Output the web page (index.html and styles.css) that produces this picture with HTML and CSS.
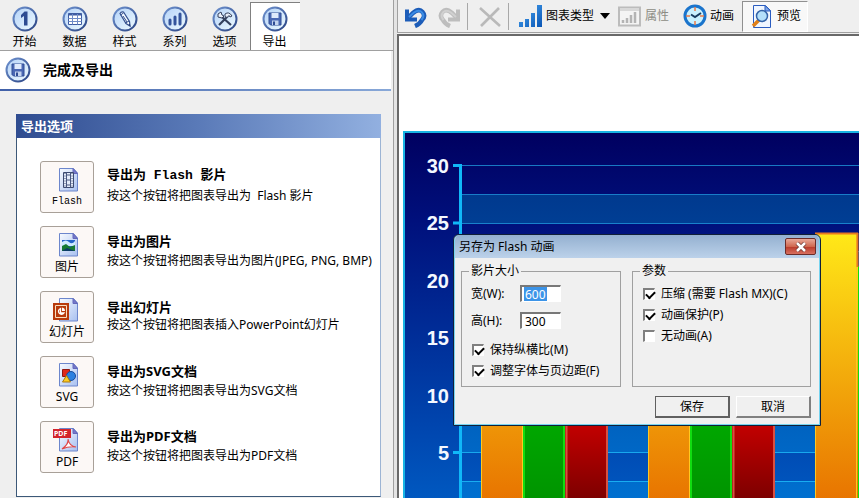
FILE: index.html
```html
<!DOCTYPE html>
<html lang="zh-CN">
<head>
<meta charset="utf-8">
<title>完成及导出</title>
<link rel="stylesheet" href="styles.css">
</head>
<body>
<svg class="defs" aria-hidden="true">
  <defs>
    <linearGradient id="ringStroke" x1="0" y1="0" x2="1" y2="1"><stop offset="0" stop-color="#6f93d0"/><stop offset="1" stop-color="#2a4484"/></linearGradient>
    <linearGradient id="ringFill" x1="0" y1="0" x2="1" y2="1"><stop offset="0" stop-color="#b4d2f8"/><stop offset="1" stop-color="#eefaff"/></linearGradient>
    <linearGradient id="pageFill" x1="0" y1="0" x2="1" y2="1"><stop offset="0" stop-color="#f8fbff"/><stop offset="1" stop-color="#a8c0f0"/></linearGradient>
    <linearGradient id="blueFill" x1="0" y1="0" x2="1" y2="1"><stop offset="0" stop-color="#4aa8f4"/><stop offset="1" stop-color="#0a55b4"/></linearGradient>
    <symbol id="ring" viewBox="0 0 26 26"><circle cx="13" cy="13" r="11.500" fill="url(#ringFill)" stroke="url(#ringStroke)" stroke-width="2"/></symbol>
    <symbol id="disk" viewBox="0 0 26 26">
      <use href="#ring"/>
      <path d="M7 7h12v12H8.500L7 17.500z" fill="#4a68b4" stroke="#2f4c94"/>
      <path d="M9.500 7h7v5h-7z" fill="#dfeafc"/><path d="M10 14.500h6.500V19H10z" fill="#c4d4ee"/><path d="M11 15.500h2V19h-2z" fill="#2f4c94"/>
    </symbol>
    <symbol id="page" viewBox="0 0 28 24">
      <path d="M6.500.500h14l4 4.500v18h-18z" fill="url(#pageFill)" stroke="#6c86cc"/>
      <path d="M20 .500v5h4.500z" fill="#7478c8" stroke="#6468bc"/>
    </symbol>
  </defs>
</svg>
<div class="app">
  <aside class="side">
    <nav class="tabs">
      <button class="tab"><svg viewBox="0 0 26 26"><use href="#ring"/><path d="M9 9l3.500-3.500H15.500V19.500h-3.500V10l-3 2z" fill="#2d4b92"/></svg>开始</button>
      <button class="tab"><svg viewBox="0 0 26 26"><use href="#ring"/><path d="M6.500 7.500h13v11h-13z" fill="#fff" stroke="#3f5ca2"/><path d="M6.500 8.500h13" stroke="#3f5ca2" stroke-width="2"/><path d="M6.500 12.500h13M6.500 15.500h13M10.500 8v10.500M15.500 8v10.500" stroke="#6f8cc8"/></svg>数据</button>
      <button class="tab"><svg viewBox="0 0 26 26"><use href="#ring"/><path d="M8 7.500q1-2 3.500-1.500l6 9.500.5 4.500-4-2.500z" fill="#f5faff" stroke="#34508f" stroke-width="1.200"/><path d="M8.500 9l3-2M13.500 17l3.500-2M11 10l4 6" stroke="#34508f"/><path d="M16.500 18.500l2 2.500-.5-3z" fill="#203468"/></svg>样式</button>
      <button class="tab"><svg viewBox="0 0 26 26"><use href="#ring"/><path d="M8 14v4M13 11v7M18 8v10" stroke="#34549c" stroke-width="3" stroke-linecap="round"/></svg>系列</button>
      <button class="tab"><svg viewBox="0 0 26 26"><use href="#ring"/><path d="M7 19l9-9M10 11l9 8" stroke="#35415e" stroke-width="2.200"/><path d="M6 8l3-2 1 3 2 1-2 2-4-1zM13 8q4-3 7 2l-2 1-1-1.500-2 2-2-1z" fill="#e8eef8" stroke="#35415e"/></svg>选项</button>
      <button class="tab tab-on"><svg viewBox="0 0 26 26"><use href="#disk"/></svg>导出</button>
    </nav>
    <header class="head">
      <svg viewBox="0 0 26 26"><use href="#disk"/></svg>
      <h1>完成及导出</h1>
    </header>
    <section class="panel">
      <h2>导出选项</h2>
      <ul class="exports">
        <li>
          <button class="export mono"><svg viewBox="0 0 28 24"><use href="#page"/><path d="M10.500 4.500h10v15h-10z" fill="#e4ecfa" stroke="#3c4a70"/><path d="M13.500 4.500v15M17.500 4.500v15M13.500 12h4M13.500 7h4M13.500 17h4" stroke="#4a5880"/><path d="M12 5v15M19 5v15" stroke="#3c4a70" stroke-dasharray="1 1.500"/></svg>Flash</button>
          <div class="about"><h3 class="mono">导出为 Flash 影片</h3><p>按这个按钮将把图表导出为&nbsp; Flash 影片</p></div>
        </li>
        <li>
          <button class="export"><svg viewBox="0 0 28 24"><use href="#page"/><path d="M9 7h13v11H9z" fill="#2464c8"/><path d="M9 9q4-3 7 0t6-1v5H9z" fill="#cdeaff"/><path d="M9 13l4-2 4 3 5-2v6H9z" fill="#167a32"/><path d="M9 18l5-3 8 3z" fill="#0c3c66"/></svg>图片</button>
          <div class="about"><h3>导出为图片</h3><p>按这个按钮将把图表导出为图片(JPEG, PNG, BMP)</p></div>
        </li>
        <li>
          <button class="export"><svg viewBox="0 0 28 24"><use href="#page"/><path d="M0 5h16v17H0z" fill="#b83a0c"/><path d="M2.500 7.500h11v12h-11z" fill="#b83a0c" stroke="#f8dfc0"/><path d="M7.500 10.500a3 3 0 1 0 3.500 4.500H7.500z" fill="none" stroke="#fff" stroke-width="1.300"/><path d="M9 9.500a3.500 3.500 0 0 1 3 3.500H9z" fill="#fff"/></svg>幻灯片</button>
          <div class="about tight"><h3>导出幻灯片</h3><p>按这个按钮将把图表插入PowerPoint幻灯片</p></div>
        </li>
        <li>
          <button class="export"><svg viewBox="0 0 28 24"><use href="#page"/><path d="M9.500 6.500h7v7h-7z" fill="#e02818" stroke="#901810"/><circle cx="18" cy="13" r="4.500" fill="#2c80e0" stroke="#184c9c"/><path d="M13.500 12.500l4 6.500h-8z" fill="#ffcc20" stroke="#a87810"/></svg>SVG</button>
          <div class="about"><h3>导出为SVG文档</h3><p>按这个按钮将把图表导出为SVG文档</p></div>
        </li>
        <li>
          <button class="export"><svg viewBox="0 0 28 24"><use href="#page"/><path d="M9 21q7-5 6-10 1 7 8 8-7-1-14 2z" fill="#fff" stroke="#e04848" stroke-width="1.200"/><path d="M0 1h18v9H0z" fill="#d3242c"/><text x="1" y="8" class="pdf-tag">PDF</text></svg>PDF</button>
          <div class="about"><h3>导出为PDF文档</h3><p>按这个按钮将把图表导出为PDF文档</p></div>
        </li>
      </ul>
    </section>
  </aside>

  <main class="work">
    <div class="toolbar">
      <button class="tool" aria-label="撤销"><svg viewBox="0 0 24 24"><path d="M4 14L9 9Q15 4 18.500 8T18 16q-2 4-7 6" fill="none" stroke="#1c5cb8" stroke-width="4.500"/><path d="M3 5.500V15.500H13" fill="none" stroke="#1c5cb8" stroke-width="4"/><path d="M5 13L10 8.500Q15 5 18 8.500T17.500 16" fill="none" stroke="#3c8ce4" stroke-width="2"/></svg></button>
      <button class="tool redo" aria-label="重做"><svg viewBox="0 0 24 24"><path d="M19 14L14 9Q8 4 4.500 8T5 16q2 4 7 6" fill="none" stroke="#bdbdbd" stroke-width="4.500"/><path d="M20 5.500V15.500H10" fill="none" stroke="#bdbdbd" stroke-width="4"/><path d="M18 13L13 8.500Q8 5 5 8.500T5.500 16" fill="none" stroke="#d0d0d0" stroke-width="2"/></svg></button>
      <span class="sep"></span>
      <button class="tool remove" aria-label="删除"><svg viewBox="0 0 24 24"><path d="M1 4l20 18M20 4L2 22" stroke="#b9b9b9" stroke-width="2.600"/></svg></button>
      <span class="sep"></span>
      <button class="tool kind"><svg viewBox="0 0 24 24"><path d="M0 18h4v5H0zM6 15h4v8H6zM12 9h4v14h-4zM18 1h5v22h-5z" fill="url(#blueFill)"/></svg>图表类型<span class="caret"></span></button>
      <button class="tool props" disabled><svg viewBox="0 0 24 24"><path d="M1 3.500h21v18H1z" fill="#f4f4f4" stroke="#bcbcbc" stroke-width="2"/><path d="M5 16v3M9 14v5M13 11v8M17 8v11" stroke="#b4b4b4" stroke-width="2.500"/><path d="M2 6h19" stroke="#bcbcbc"/></svg>属性</button>
      <button class="tool anim"><svg viewBox="0 0 24 24"><circle cx="12" cy="12" r="10" fill="#c9f1ff" stroke="#1a74cc" stroke-width="3"/><path d="M12 3v4M12 17v4M3 12h4M17 12h4" stroke="#e87848" stroke-width="1.500"/><path d="M8 10.500l4 2.500 6-4" fill="none" stroke="#183c60" stroke-width="2"/></svg>动画</button>
      <button class="tool preview"><svg viewBox="0 0 24 24"><path d="M2.500 1.500h12l5 5v17h-17z" fill="#f0f6ff" stroke="#2a5cc0"/><path d="M14 1.500V7h5.500z" fill="#80a8e8" stroke="#2a5cc0"/><path d="M8 16l-6 6" stroke="#e08018" stroke-width="3.500"/><circle cx="11" cy="12" r="5.500" fill="#b4e0fa" stroke="#3464a8" stroke-width="1.500"/></svg>预览</button>
    </div>
    <div class="canvas">
      <div class="chart">
        <svg class="plot" role="img" aria-label="图表预览">
          <defs>
            <linearGradient id="light" gradientUnits="userSpaceOnUse" x1="0" y1="34" x2="0" y2="367"><stop offset="0" stop-color="#003488"/><stop offset="1" stop-color="#0070d0"/></linearGradient>
            <linearGradient id="line" gradientUnits="userSpaceOnUse" x1="0" y1="34" x2="0" y2="367"><stop offset="0" stop-color="#1878c4"/><stop offset="1" stop-color="#18b0f4"/></linearGradient>
            <linearGradient id="gold" gradientUnits="userSpaceOnUse" x1="0" y1="102" x2="0" y2="367"><stop offset="0" stop-color="#ffe818"/><stop offset="1" stop-color="#e87400"/></linearGradient>
            <linearGradient id="green" gradientUnits="userSpaceOnUse" x1="0" y1="130" x2="0" y2="367"><stop offset="0" stop-color="#00d000"/><stop offset="1" stop-color="#009400"/></linearGradient>
            <linearGradient id="red" gradientUnits="userSpaceOnUse" x1="0" y1="290" x2="0" y2="367"><stop offset="0" stop-color="#c40000"/><stop offset="1" stop-color="#7c0000"/></linearGradient>
          </defs>
          <g fill="url(#light)">
            <rect x="57" y="61" width="100%" height="29"/><rect x="57" y="118" width="100%" height="29"/><rect x="57" y="176" width="100%" height="29"/><rect x="57" y="233" width="100%" height="29"/><rect x="57" y="291" width="100%" height="29"/><rect x="57" y="348" width="100%" height="29"/>
          </g>
          <g fill="url(#line)">
            <rect x="57" y="32" width="100%" height="1"/><rect x="57" y="61" width="100%" height="1"/><rect x="57" y="90" width="100%" height="1"/><rect x="57" y="118" width="100%" height="1"/><rect x="57" y="147" width="100%" height="1"/><rect x="57" y="319" width="100%" height="1"/><rect x="57" y="348" width="100%" height="1"/>
          </g>
          <path d="M48 32.500h9M48 90h9M48 319.500h9" stroke="#10b8f8" stroke-width="3"/>
          <path d="M55.500 31v400" stroke="#10b8f8" stroke-width="3"/>
          <g fill="url(#gold)"><rect x="76" y="240" width="42" height="200"/><rect x="243" y="240" width="42" height="200"/><rect x="410" y="100" width="43" height="340"/></g>
          <g fill="url(#green)"><rect x="118" y="240" width="42" height="200"/><rect x="285" y="240" width="42" height="200"/><rect x="453" y="133" width="42" height="300"/></g>
          <g fill="url(#red)"><rect x="160" y="240" width="43" height="200"/><rect x="327" y="240" width="43" height="200"/></g>
          <path d="M76.500 240v200M117.500 240v200M243.500 240v200M284.500 240v200M410.500 100v340M451.500 100v340" stroke="#ffc820" stroke-width="1"/>
          <path d="M410 100.500h43M452.500 100v34" stroke="#e87820" stroke-width="2"/>
          <path d="M119 240v200M159 240v200M286 240v200M326 240v200M454 134v300" stroke="#10dc10" stroke-width="2"/>
          <path d="M161.500 240v200M202 240v200M328.500 240v200M369 240v200" stroke="#d85040" stroke-width="2"/>
          <g class="scale"><text x="44" y="40">30</text><text x="44" y="97">25</text><text x="44" y="155">20</text><text x="44" y="212">15</text><text x="44" y="270">10</text><text x="44" y="327">5</text></g>
        </svg>
      </div>
    </div>
  </main>

  <form class="dialog" role="dialog" aria-labelledby="dlg">
    <div class="titlebar"><span id="dlg">另存为 Flash 动画</span>
      <button type="button" class="close" aria-label="关闭"><svg viewBox="0 0 12 10"><path d="M2 1l8 8M10 1L2 9" stroke="#6c3430" stroke-width="4"/><path d="M2 1l8 8M10 1L2 9" stroke="#fff" stroke-width="2.500"/></svg></button>
    </div>
    <div class="groups">
      <fieldset>
        <legend>影片大小</legend>
        <div class="field"><label for="w">宽(W):</label><input id="w" class="picked" type="text" value="600"></div>
        <div class="field"><label for="h">高(H):</label><input id="h" type="text" value="300"></div>
        <label class="check"><input type="checkbox" checked>保持纵横比(M)</label>
        <label class="check"><input type="checkbox" checked>调整字体与页边距(F)</label>
      </fieldset>
      <fieldset>
        <legend>参数</legend>
        <label class="check"><input type="checkbox" checked>压缩 (需要 Flash MX)(C)</label>
        <label class="check"><input type="checkbox" checked>动画保护(P)</label>
        <label class="check"><input type="checkbox">无动画(A)</label>
      </fieldset>
    </div>
    <div class="actions"><button type="button" class="main">保存</button><button type="button">取消</button></div>
  </form>
</div>
</body>
</html>
```
FILE: styles.css
```css
* { box-sizing: border-box; }
body {
  margin: 0;
  background: #efefef;
  color: #000;
  font: 12px/16px "Noto Sans", "Noto Sans CJK SC", sans-serif;
}
button, input { font: inherit; color: inherit; }
button { padding: 0; border: 0; background: none; }
h1, h2, h3, p, ul { margin: 0; padding: 0; }
svg { display: block; flex: none; }
.defs { position: absolute; width: 0; height: 0; }

.app {
  position: relative;
  display: grid;
  grid-template-columns: 397px minmax(0, 1fr);
  height: 100vh;
  overflow: hidden;
}

/* Left pane */
.side {
  display: flex;
  flex-direction: column;
  border-right: 3px solid #e4e4e4;
  box-shadow: inset -1px 0 #a0a0a0;
}
.tabs {
  display: flex;
  padding-top: 2px;
  margin-right: 1px;
  border-bottom: 1px solid #a0a0a0;
}
.tab {
  display: flex;
  flex-direction: column;
  align-items: center;
  gap: 2px;
  width: 50px;
  height: 48px;
  padding: 4px 2px 0 0;
  border-left: 1px solid transparent;
}
.tab svg { width: 26px; height: 26px; }
.tab-on {
  background: #fff;
  border-left-color: #808080;
  box-shadow: inset 0 1px #808080;
}
.head {
  display: flex;
  align-items: center;
  gap: 12px;
  height: 40px;
  margin-right: 3px;
  padding-left: 5px;
  background: #fff;
  border-bottom: 2px solid;
  border-image: linear-gradient(90deg, #4060a8, #88a8d8) 1;
}
.head svg { width: 26px; height: 26px; }
.head h1 { font-size: 14px; line-height: 20px; }
.panel {
  flex: 1;
  margin: 23px 13px 1px 16px;
  background: #fff;
  border: 1px solid #3c5878;
  border-right-color: #9cb4d4;
  border-top: 0;
}
.panel h2 {
  margin: 0 -1px;
  padding-left: 5px;
  background: linear-gradient(90deg, #2f4c90, #5a7ab8 50%, #92b0e0);
  color: #fff;
  font-size: 13px;
  line-height: 24px;
}
.exports {
  display: grid;
  gap: 13px;
  padding: 23px 0 0 23px;
  list-style: none;
}
.exports li { display: flex; align-items: center; gap: 13px; }
.export {
  display: flex;
  flex-direction: column;
  align-items: center;
  justify-content: space-between;
  width: 54px;
  height: 52px;
  padding: 6px 0 2px;
  background: #fcf8f6;
  border: 1px solid #a8a098;
  border-radius: 3px;
}
.export svg { width: 28px; height: 24px; }
.mono { font-family: "Liberation Mono", "Noto Sans CJK SC", monospace; }
.export.mono { font-size: 10px; }
.about { padding-bottom: 2px; line-height: 20px; white-space: nowrap; }
.about h3 { font-size: 13px; line-height: inherit; }
.tight { line-height: 18px; }
.pdf-tag { font: bold 7px "Noto Sans", sans-serif; fill: #fff; }

/* Right pane */
.work { display: flex; flex-direction: column; min-width: 0; }
.toolbar {
  display: flex;
  align-items: center;
  height: 33px;
  padding-left: 6px;
  border-left: 1px solid #a0a0a0;
  border-bottom: 1px solid #a0a0a0;
}
.tool { display: flex; align-items: center; gap: 3px; height: 31px; white-space: nowrap; }
.tool svg { width: 24px; height: 24px; }
.redo { margin: 0 5px 0 10px; }
.sep { width: 1px; height: 27px; background: #a8a8a8; }
.remove { margin: 0 5px 0 11px; }
.kind { margin-left: 10px; }
.caret {
  margin: 0 8px 0 3px;
  border: solid transparent;
  border-width: 6px 5px 0;
  border-top-color: #000;
}
.props { color: #8c8c84; }
.anim { margin: 0 8px 0 14px; }
.preview {
  padding: 0 6px 0 8px;
  gap: 2px;
  background: #f8f8f8;
  border: 1px solid #909090;
  border-right-color: #fff;
  border-bottom-color: #fff;
}
.canvas {
  flex: 1;
  display: flex;
  min-height: 0;
  margin-top: 1px;
  padding: 95px 0 0 4px;
  background: #fff;
  border: solid #696969;
  border-width: 2px 0 0 2px;
}
.chart {
  flex: 1;
  min-width: 0;
  border: solid #18b4e4;
  border-width: 2px 0 0 2px;
  background: linear-gradient(#000060, #00107c 24%, #0058c0);
}
.plot { width: 100%; height: 100%; }
.scale {
  font: bold 20px "Liberation Sans", sans-serif;
  fill: #f4f8ff;
  text-anchor: end;
}

/* Dialog floating over the chart */
.dialog {
  position: absolute;
  left: 453px;
  top: 234px;
  width: 368px;
  background: #f0f0f0;
  border: 1px solid #102038;
  border-radius: 6px 6px 0 0;
  box-shadow: inset 0 0 0 1px #78d4f0;
}
.titlebar {
  display: flex;
  align-items: center;
  justify-content: space-between;
  height: 23px;
  margin: 0 1px;
  padding: 0 3px 0 4px;
  background: linear-gradient(#94b0d0, #bcd2ea);
  border-radius: 5px 5px 0 0;
}
.close {
  display: grid;
  place-items: center;
  width: 31px;
  height: 17px;
  background: linear-gradient(#e8a898, #d06850 50%, #b83828 51%, #d87060);
  border: 1px solid #6c2c28;
  border-radius: 2px;
}
.close svg { width: 12px; height: 10px; }
.groups {
  display: grid;
  grid-template-columns: 160px 1fr;
  gap: 11px;
  padding: 5px 9px 0 7px;
}
fieldset {
  min-width: 0;
  margin: 0;
  padding: 4px 0 5px 9px;
  border: 1px solid #a0a0a0;
}
legend { margin-left: -2px; padding: 0 2px; line-height: 16px; }
.field { display: flex; align-items: center; height: 17px; margin: 2px 0 10px; }
.field label { width: 49px; }
.field input {
  width: 41px;
  height: 17px;
  padding: 0 3px;
  background: #fff;
  border: 1px solid #fff;
  border-top: 2px solid #787878;
  border-left: 2px solid #787878;
}
.field .picked {
  color: #fff;
  background: linear-gradient(#3c94e8, #3c94e8) 2px 0 / 23px 100% no-repeat #fff;
}
.check { display: flex; align-items: center; gap: 6px; height: 21px; padding-left: 1px; white-space: nowrap; }
.check input {
  appearance: none;
  width: 12px;
  height: 12px;
  margin: 0;
  background: #fff;
  border: 1px solid #fff;
  border-top: 2px solid #808080;
  border-left: 2px solid #808080;
}
.check input:checked::before {
  content: "";
  display: block;
  width: 7px;
  height: 4px;
  margin: 1px;
  border: solid #000;
  border-width: 0 0 2px 2px;
  transform: rotate(-45deg);
}
.actions { display: flex; justify-content: flex-end; gap: 6px; padding: 9px 9px 7px; }
.actions button {
  width: 75px;
  height: 22px;
  background: #f0f0f0;
  border: 1px solid #fff;
  border-right: 2px solid #808080;
  border-bottom: 2px solid #808080;
}
.actions .main { border-color: #606060; }
```
